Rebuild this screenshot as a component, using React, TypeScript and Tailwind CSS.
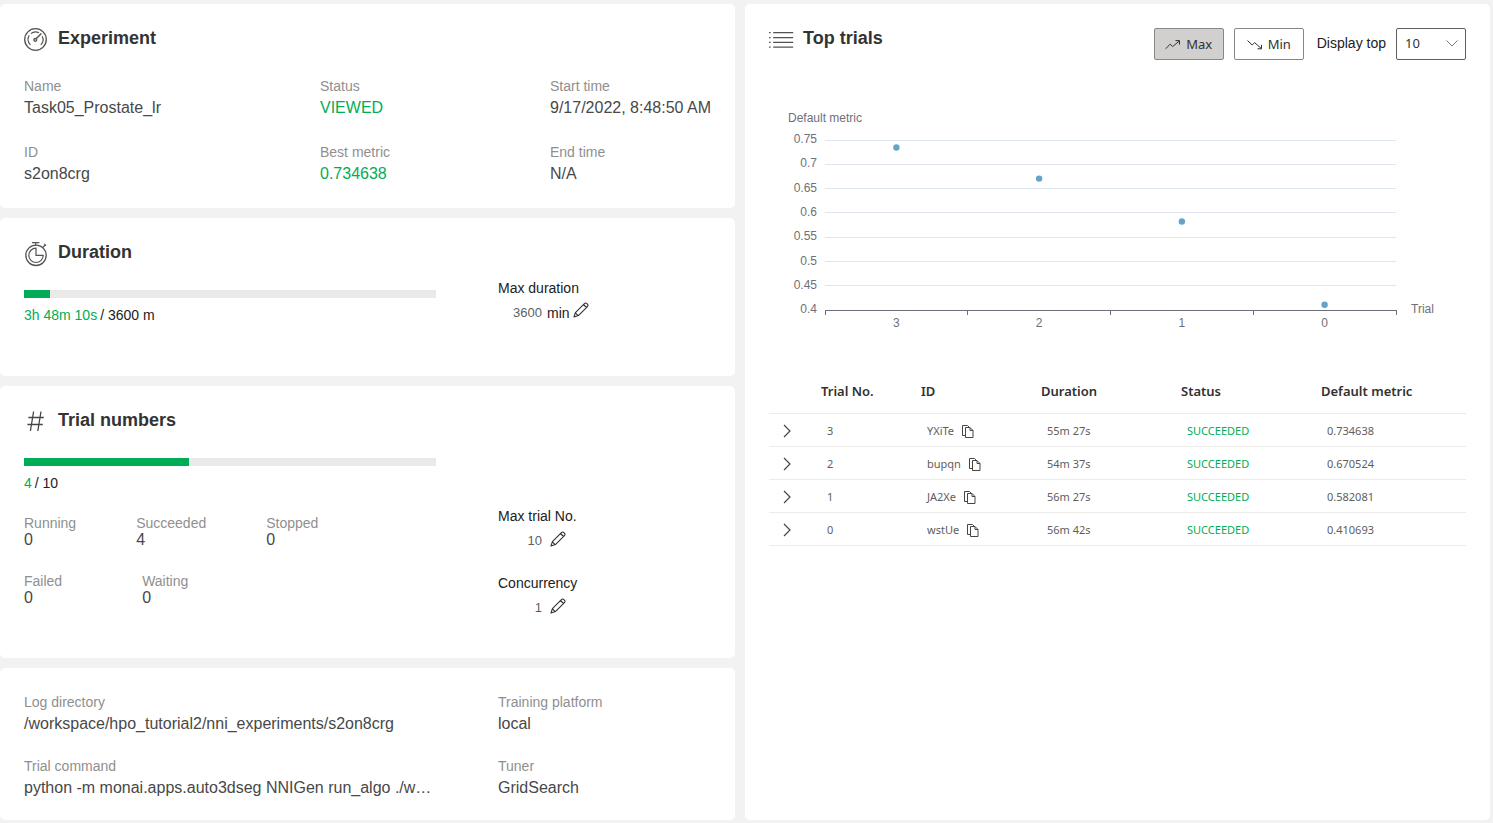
import React from 'react';

const SANS = "font-['Liberation_Sans',Arial,sans-serif]";
const UI = "font-['Noto_Sans','Open_Sans',sans-serif]";

type IconProps = { className?: string };

function GaugeIcon() {
  return (
    <svg viewBox="0 0 24 24" className="size-6 shrink-0 text-[#55524f]" fill="none" stroke="currentColor" strokeWidth="1.2" aria-hidden="true">
      <circle cx="11.5" cy="11.5" r="10.8" strokeWidth="1.3" />
      <path d="M6.4 16.9A7.6 7.6 0 0 1 5.2 7.4" />
      <path d="M6.8 5.6A7.6 7.6 0 0 1 15 4.8" />
      <path d="M18.2 8.2A7.6 7.6 0 0 1 16.8 16.9" />
      <circle cx="11.3" cy="11.8" r="1.5" fill="currentColor" fillOpacity="0.4" />
      <path d="M12.4 10.6 17.4 5.4" strokeWidth="1.4" />
    </svg>
  );
}

function StopwatchIcon() {
  return (
    <svg viewBox="0 0 24 24" className="size-6 shrink-0 overflow-visible text-[#55524f]" fill="none" stroke="currentColor" strokeWidth="1.2" aria-hidden="true">
      <circle cx="12" cy="13.3" r="10.2" strokeWidth="1.3" />
      <path d="M12 6.1a7.2 7.2 0 1 0 7.2 7.2H12z" />
      <path d="M8 .6h7.4M11.7.6v2.6M18.6 5.6l2.6-2.6M20.2 1.8l1.9 1.9" />
    </svg>
  );
}

function HashIcon() {
  return (
    <svg viewBox="0 0 24 24" className="size-6 shrink-0 text-[#484644]" fill="none" stroke="currentColor" strokeWidth="1.3" aria-hidden="true">
      <path d="M9.6 1.5 6.4 21M17 1.5 13.8 21M4.4 7.5h15.4M3.4 14.5h15.4" />
    </svg>
  );
}

function ListIcon() {
  return (
    <svg viewBox="0 0 24 24" className="size-6 shrink-0 overflow-visible text-[#55524f]" fill="none" stroke="currentColor" strokeWidth="1.3" aria-hidden="true">
      <path d="M4.200 4.700h20M4.200 9.600h20M4.200 14.400h20M4.200 19.200h20" />
      <path d="M0 4.700h1.600M0 9.600h1.600M0 14.400h1.600M0 19.200h1.600" />
    </svg>
  );
}

function TrendIcon({ down = false }: { down?: boolean }) {
  return (
    <svg viewBox="0 0 16 16" className="size-4 shrink-0 text-[#323130]" fill="none" stroke="currentColor" strokeWidth="1" aria-hidden="true">
      {down ? (
        <path d="M.5 3.500 5.200 8l2.400-2.400L14.300 11.500M10.500 11.800h4v-4" />
      ) : (
        <path d="M.5 11.800 5.200 7.200l2.400 2.400L14.300 4M10.500 3.600h4v4" />
      )}
    </svg>
  );
}

function PencilIcon({ className }: IconProps) {
  return (
    <svg viewBox="0 0 16 16" className={className} fill="none" stroke="currentColor" strokeWidth="1.1" strokeLinejoin="round" aria-hidden="true">
      <path d="M1 15 2.400 10.600 11.400 1.600a1.800 1.800 0 0 1 2.500 0l.5.5a1.800 1.800 0 0 1 0 2.500L5.400 13.600zM10.500 2.500l3 3M2.400 10.800l2.800 2.800" />
    </svg>
  );
}

function CopyIcon() {
  return (
    <svg viewBox="0 0 12 13" className="h-[13px] w-3" fill="none" stroke="currentColor" strokeWidth="1" aria-hidden="true">
      <path d="M3.500 10.500h-3V.5h5l2 2" />
      <path d="M3.500 2.500h4.500l3 3v7h-7.500z" />
      <path d="M8 2.500v3h3" />
    </svg>
  );
}

function Card({ className = '', children }: { className?: string; children: React.ReactNode }) {
  return <section className={`rounded-[5px] bg-white px-6 pt-6 ${className}`}>{children}</section>;
}

function Heading({ icon, children }: { icon: React.ReactNode; children: React.ReactNode }) {
  return (
    <div className="flex h-6 items-start gap-[10px]">
      {icon}
      <h2 className="text-[18px] leading-5 font-bold text-[#333333]">{children}</h2>
    </div>
  );
}

function Field({ label, value, green = false }: { label: string; value: string; green?: boolean }) {
  return (
    <div className="min-w-0">
      <dt className="text-sm leading-5 text-[#8f8f8f]">{label}</dt>
      <dd className={`truncate text-base leading-6 ${green ? 'text-[#00ad56]' : 'text-[#484848]'}`}>{value}</dd>
    </div>
  );
}

function Progress({ value, label, children }: { value: number; label: string; children: React.ReactNode }) {
  return (
    <>
      <div role="progressbar" aria-label={label} aria-valuenow={value} aria-valuemin={0} aria-valuemax={100} className="h-2 bg-[#ebeae8]">
        <div className="h-2 bg-[#00ad56]" style={{ width: `${value}%` }} />
      </div>
      <p className="mt-[7px] text-sm leading-5 text-[#212121]">{children}</p>
    </>
  );
}

function EditField({ id, label, value, unit }: { id: string; label: string; value: string; unit?: string }) {
  return (
    <div>
      <label htmlFor={id} className="block text-sm leading-5 text-[#212121]">
        {label}
      </label>
      <div className="mt-[5px] flex h-5 items-center">
        <input id={id} defaultValue={value} readOnly className="h-5 w-11 text-right text-[13px] leading-5 text-[#5f5f5f] outline-none" />
        {unit ? <span className="ml-[5px] text-sm leading-5 text-[#212121]">{unit}</span> : null}
        <button type="button" aria-label={`Edit ${label}`} className={unit ? 'mb-1.5 ml-[3px]' : 'mb-1 ml-2'}>
          <PencilIcon className="size-4 text-[#323130]" />
        </button>
      </div>
    </div>
  );
}

function Count({ label, value }: { label: string; value: number }) {
  return (
    <div>
      <dt className="text-sm leading-4 text-[#8f8f8f]">{label}</dt>
      <dd className="text-base leading-[18px] text-[#484848]">{value}</dd>
    </div>
  );
}

const trials = [
  { no: 3, id: 'YXiTe', duration: '55m 27s', metric: 0.734638 },
  { no: 2, id: 'bupqn', duration: '54m 37s', metric: 0.670524 },
  { no: 1, id: 'JA2Xe', duration: '56m 27s', metric: 0.582081 },
  { no: 0, id: 'wstUe', duration: '56m 42s', metric: 0.410693 },
];

const ticks = [0.75, 0.7, 0.65, 0.6, 0.55, 0.5, 0.45, 0.4];
const LEFT = 56;
const RIGHT = 627;
const BAND = (RIGHT - LEFT) / 4;
const yOf = (v: number) => 40 + ((0.75 - v) / 0.35) * 170;

function Chart() {
  return (
    <svg viewBox="0 0 697 240" className="mt-10 w-full" role="img" aria-label="Default metric by trial" fontSize="12" fill="#6e7079">
      <text x="56" y="22" textAnchor="middle">Default metric</text>
      {ticks.map((t) => (
        <g key={t}>
          <text x={LEFT - 8} y={Math.round(yOf(t) + 0.2) + 3} textAnchor="end">{t}</text>
          {t > 0.4 ? <path d={`M${LEFT} ${Math.floor(yOf(t)) + 0.5}H${RIGHT}`} stroke="#e0e6f1" /> : null}
        </g>
      ))}
      <path d={`M${LEFT} 210.5H${RIGHT + 1}`} stroke="#6e7079" />
      {[0, 1, 2, 3, 4].map((i) => (
        <path key={i} d={`M${Math.floor(LEFT + i * BAND) + 0.5} 210v5`} stroke="#6e7079" />
      ))}
      {trials.map((t, i) => (
        <g key={t.no}>
          <circle cx={LEFT + (i + 0.5) * BAND} cy={yOf(t.metric)} r="3.2" fill="#66a3c9" />
          <text x={LEFT + (i + 0.5) * BAND} y="227" textAnchor="middle">{t.no}</text>
        </g>
      ))}
      <text x="642" y="213">Trial</text>
    </svg>
  );
}

function TrialsTable() {
  return (
    <table className={`mt-[30px] w-full table-fixed border-collapse text-left ${UI}`}>
      <colgroup>
        <col className="w-[52px]" />
        <col className="w-[100px]" />
        <col className="w-[120px]" />
        <col className="w-[140px]" />
        <col className="w-[140px]" />
        <col />
      </colgroup>
      <thead>
        <tr className="h-[43px] border-b border-[#edebe9] text-[13px] text-[#323130]">
          <th aria-label="Expand" />
          {['Trial No.', 'ID', 'Duration', 'Status', 'Default metric'].map((h) => (
            <th key={h} scope="col" className="font-semibold">{h}</th>
          ))}
        </tr>
      </thead>
      <tbody>
        {trials.map((t) => (
          <tr key={t.no} className="h-[33px] border-b border-[#edebe9] text-[11px] text-[#605e5c]">
            <td className="pt-0.5">
              <button type="button" aria-label={`Expand trial ${t.no}`} className="ml-[14px] block">
                <svg viewBox="0 0 8 14" className="h-[14px] w-2 text-[#484644]" fill="none" stroke="currentColor" strokeWidth="1.2" aria-hidden="true">
                  <path d="M1 1l6 6-6 6" />
                </svg>
              </button>
            </td>
            <td className="pt-1 pl-[6px]">{t.no}</td>
            <td className="pt-1 pl-[6px]">
              <div className="flex items-center gap-2">
                {t.id}
                <button type="button" aria-label={`Copy ${t.id}`} className="text-[#484644]">
                  <CopyIcon />
                </button>
              </div>
            </td>
            <td className="pt-1 pl-[6px]">{t.duration}</td>
            <td className="pt-1 pl-[6px] text-[#00ad56]">SUCCEEDED</td>
            <td className="pt-1 pl-[6px]">{t.metric}</td>
          </tr>
        ))}
      </tbody>
    </table>
  );
}

export default function App() {
  const button = `flex h-8 w-[70px] items-center justify-center gap-[5px] rounded-[2px] border border-[#8a8886] pt-0.5 text-[13px] text-[#323130] ${UI}`;
  return (
    <main className={`grid min-h-screen grid-cols-[735fr_745fr] gap-[10px] bg-[#f2f2f2] pt-1 pr-[3px] pb-[3px] ${SANS}`}>
      <div className="flex min-w-0 flex-col gap-[10px]">
        <Card className="pb-[22px]">
          <Heading icon={<GaugeIcon />}>Experiment</Heading>
          <dl className="mt-6 grid grid-cols-[296fr_230fr_161fr] gap-y-[22px]">
            <Field label="Name" value="Task05_Prostate_lr" />
            <Field label="Status" value="VIEWED" green />
            <Field label="Start time" value="9/17/2022, 8:48:50 AM" />
            <Field label="ID" value="s2on8crg" />
            <Field label="Best metric" value="0.734638" green />
            <Field label="End time" value="N/A" />
          </dl>
        </Card>

        <Card className="pb-[51px]">
          <Heading icon={<StopwatchIcon />}>Duration</Heading>
          <div className="mt-3 grid grid-cols-[412fr_213fr] gap-x-[62px]">
            <div className="pt-3">
              <Progress value={6.34} label="Duration">
                <span className="text-[#00ad56]">3h 48m 10s</span>
                <span className="ml-[3px]">/ 3600 m</span>
              </Progress>
            </div>
            <EditField id="max-duration" label="Max duration" value="3600" unit="min" />
          </div>
        </Card>

        <Card className="pb-10">
          <Heading icon={<HashIcon />}>Trial numbers</Heading>
          <div className="mt-6 grid grid-cols-[412fr_213fr] gap-x-[62px]">
            <div>
              <Progress value={40} label="Trials">
                <span className="text-[#00ad56]">4</span>
                <span className="ml-[3px]">/ 10</span>
              </Progress>
              <dl className="mt-[22px] flex gap-15">
                <Count label="Running" value={0} />
                <Count label="Succeeded" value={4} />
                <Count label="Stopped" value={0} />
              </dl>
              <dl className="mt-6 flex gap-20">
                <Count label="Failed" value={0} />
                <Count label="Waiting" value={0} />
              </dl>
            </div>
            <div className="flex flex-col gap-[22px] pt-12">
              <EditField id="max-trials" label="Max trial No." value="10" />
              <EditField id="concurrency" label="Concurrency" value="1" />
            </div>
          </div>
        </Card>

        <Card className="pb-5">
          <dl className="grid grid-cols-[412fr_213fr] gap-x-[62px] gap-y-5">
            <Field label="Log directory" value="/workspace/hpo_tutorial2/nni_experiments/s2on8crg" />
            <Field label="Training platform" value="local" />
            <Field label="Trial command" value="python -m monai.apps.auto3dseg NNIGen run_algo ./w…" />
            <Field label="Tuner" value="GridSearch" />
          </dl>
        </Card>
      </div>

      <Card className="min-w-0 pb-6">
        <div className="flex items-start justify-between">
          <Heading icon={<ListIcon />}>Top trials</Heading>
          <div className="flex items-center gap-[10px]">
            <button type="button" aria-pressed="true" className={`${button} bg-[#d2d0ce]`}>
              <TrendIcon />
              Max
            </button>
            <button type="button" aria-pressed="false" className={`${button} bg-white`}>
              <TrendIcon down />
              Min
            </button>
            <label htmlFor="top-count" className="mb-0.5 ml-[3px] text-sm leading-5 text-[#212121]">
              Display top
            </label>
            <div className="relative">
              <select id="top-count" defaultValue="10" className={`block h-8 w-[70px] appearance-none rounded-[2px] border border-[#605e5c] bg-white pl-2 text-[13px] text-[#323130] ${UI}`}>
                <option>10</option>
                <option>20</option>
                <option>30</option>
              </select>
              <svg viewBox="0 0 12 7" className="pointer-events-none absolute top-3 right-2 h-[7px] w-3 text-[#7a7876]" fill="none" stroke="currentColor" aria-hidden="true">
                <path d="M.5.5 6 6 11.5.5" />
              </svg>
            </div>
          </div>
        </div>
        <Chart />
        <TrialsTable />
      </Card>
    </main>
  );
}
